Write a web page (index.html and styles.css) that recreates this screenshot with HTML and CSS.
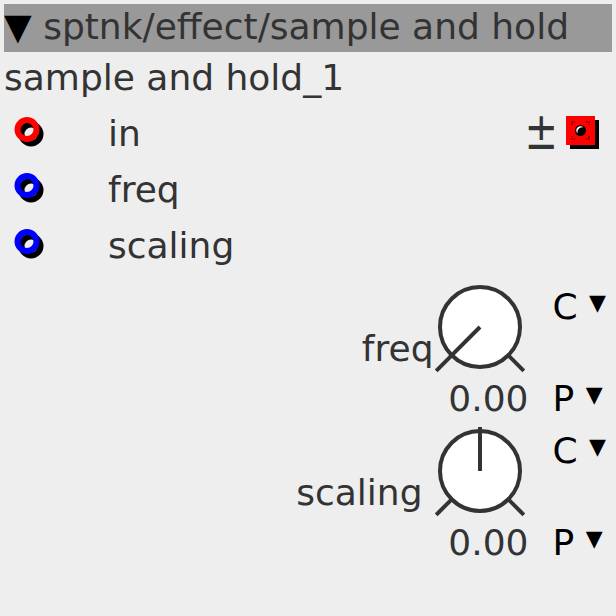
FILE: index.html
```html
<!DOCTYPE html>
<html lang="en">
<head>
    <meta charset="UTF-8">
    <title>sample and hold</title>
    <link rel="stylesheet" href="styles.css">
</head>
<body>
    <div class="node">
        <div class="node-head"><span class="caret">▼</span> sptnk/effect/sample and hold</div>
        <div class="node-title">sample and hold_1</div>

        <div class="ports">
            <div class="port-row">
                <svg class="port-icon" width="40" height="40" viewBox="0 0 40 40">
                    <circle cx="20" cy="21" r="9.5" fill="none" stroke="#000" stroke-width="6"/>
                    <circle cx="16" cy="16.5" r="9.5" fill="none" stroke="#f00" stroke-width="6"/>
                </svg>
                <span class="port-name">in</span>
                <div class="port-tools">
                    <span class="pm">±</span>
                    <svg class="mode-box" width="34" height="34" viewBox="0 0 34 34">
                        <rect x="4" y="4" width="29" height="29" fill="#000"/>
                        <rect x="0" y="0" width="29" height="29" fill="#f00"/>
                        <path d="M6 9V6h3M20 6h3v3M23 20v3h-3M9 23H6v-3" fill="none" stroke="#300" stroke-width="1.2" stroke-dasharray="1.5 1"/>
                        <circle cx="14.5" cy="14.5" r="5.5" fill="#000"/>
                        <path d="M11.5 17.5a4 4 0 0 1 6-6a5 5 0 0 0-6 6z" fill="#fff"/>
                    </svg>
                </div>
            </div>
            <div class="port-row">
                <svg class="port-icon" width="40" height="40" viewBox="0 0 40 40">
                    <circle cx="20" cy="21" r="9.5" fill="none" stroke="#000" stroke-width="6"/>
                    <circle cx="16" cy="16.5" r="9.5" fill="none" stroke="#00f" stroke-width="6"/>
                </svg>
                <span class="port-name">freq</span>
            </div>
            <div class="port-row">
                <svg class="port-icon" width="40" height="40" viewBox="0 0 40 40">
                    <circle cx="20" cy="21" r="9.5" fill="none" stroke="#000" stroke-width="6"/>
                    <circle cx="16" cy="16.5" r="9.5" fill="none" stroke="#00f" stroke-width="6"/>
                </svg>
                <span class="port-name">scaling</span>
            </div>
        </div>

        <div class="params">
            <div class="param">
                <span class="param-label">freq</span>
                <div class="knob-col">
                    <svg class="knob" width="96" height="98" viewBox="0 0 96 98">
                        <circle cx="48" cy="48" r="40" fill="#fff" stroke="#333" stroke-width="4"/>
                        <path d="M19.7 76.3L4.2 91.8M76.3 76.3L91.8 91.8M48 48L16.9 79.1" stroke="#333" stroke-width="4"/>
                    </svg>
                    <span class="param-value">0.00</span>
                </div>
                <div class="param-modes">
                    <span class="mode">C <span class="arrow">▼</span></span>
                    <span class="mode">P <span class="arrow">▼</span></span>
                </div>
            </div>
            <div class="param">
                <span class="param-label label-wide">scaling</span>
                <div class="knob-col">
                    <svg class="knob" width="96" height="98" viewBox="0 0 96 98">
                        <circle cx="48" cy="48" r="40" fill="#fff" stroke="#333" stroke-width="4"/>
                        <path d="M19.7 76.3L4.2 91.8M76.3 76.3L91.8 91.8M48 48L48 4" stroke="#333" stroke-width="4"/>
                    </svg>
                    <span class="param-value">0.00</span>
                </div>
                <div class="param-modes">
                    <span class="mode">C <span class="arrow">▼</span></span>
                    <span class="mode">P <span class="arrow">▼</span></span>
                </div>
            </div>
        </div>
    </div>
</body>
</html>
```

FILE: styles.css
```css
body { margin: 0; padding: 4px; background-color: #eee; color: #333; font-family: "DejaVu Sans", sans-serif; font-size: 36px; }
.node { background-color: #eee; height: 608px; }
.node-head {
    background-color: #999;
    height: 48px;
    line-height: 46px;
    white-space: nowrap;
}
.caret { color: #000; }
.node-title { line-height: 46px; padding-top: 3px; white-space: nowrap; }

.ports { padding-top: 4px; }
.port-row {
    display: flex;
    align-items: center;
    height: 56px;
}
.port-icon { margin-left: 7px; margin-right: 57px; flex: none; }
.port-name { flex: 1; }
.port-tools { display: flex; align-items: center; gap: 8px; margin-right: 12px; }
.pm { display: inline-block; font-size: 40px; line-height: 36px; transform: scaleY(1.3); margin-top: -4px; }
.mode-box { display: block; }

.params { padding-top: 6px; }
.param {
    display: flex;
    justify-content: flex-end;
    height: 144px;
    padding-right: 6px;
}
.param-label { margin-top: 49px; margin-right: -1px; line-height: 42px; }
.label-wide { margin-right: 10px; }
.knob-col { display: flex; flex-direction: column; align-items: flex-end; }
.knob { display: block; }
.param-value { line-height: 42px; margin-top: 1px; }
.param-modes {
    display: flex;
    flex-direction: column;
    justify-content: space-between;
    box-sizing: border-box;
    margin-left: 24px;
    padding-top: 6px;
    height: 138px;
    color: #000;
}
.mode { line-height: 36px; white-space: nowrap; }
.arrow { font-size: 22px; vertical-align: 9px; }
```
